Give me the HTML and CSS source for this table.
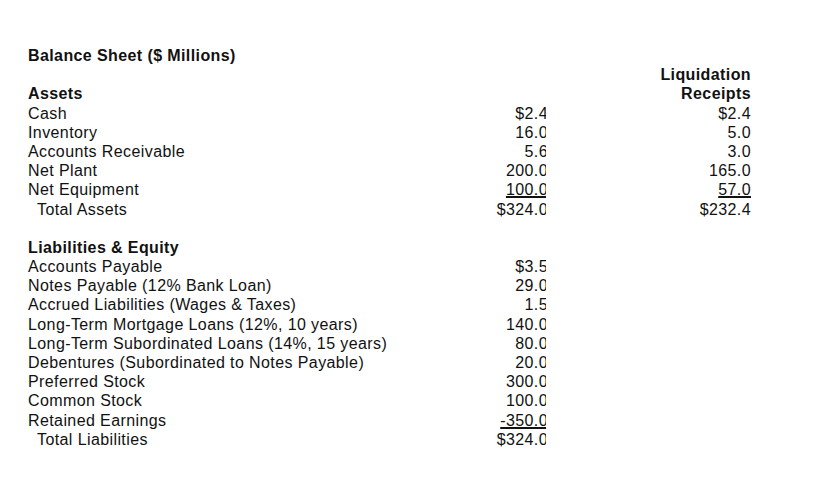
FILE: index.html
```html
<!DOCTYPE html>
<html>
<head>
<meta charset="utf-8">
<link rel="stylesheet" href="styles.css">
</head>
<body>
<div class="sheet">
  <div class="row"><span class="label bold">Balance Sheet ($ Millions)</span><span class="num"></span><span class="liq"></span></div>
  <div class="row"><span class="label"></span><span class="num"></span><span class="liq bold">Liquidation</span></div>
  <div class="row"><span class="label bold">Assets</span><span class="num"></span><span class="liq bold">Receipts</span></div>
  <div class="row"><span class="label">Cash</span><span class="num"><span class="v">$2.4</span></span><span class="liq">$2.4</span></div>
  <div class="row"><span class="label">Inventory</span><span class="num"><span class="v">16.0</span></span><span class="liq">5.0</span></div>
  <div class="row"><span class="label">Accounts Receivable</span><span class="num"><span class="v">5.6</span></span><span class="liq">3.0</span></div>
  <div class="row"><span class="label">Net Plant</span><span class="num"><span class="v">200.0</span></span><span class="liq">165.0</span></div>
  <div class="row"><span class="label">Net Equipment</span><span class="num"><span class="v ul">100.0</span></span><span class="liq"><span class="ul">57.0</span></span></div>
  <div class="row"><span class="label indent">Total Assets</span><span class="num"><span class="v">$324.0</span></span><span class="liq">$232.4</span></div>
  <div class="row"><span class="label"></span><span class="num"></span><span class="liq"></span></div>
  <div class="row"><span class="label bold">Liabilities &amp; Equity</span><span class="num"></span><span class="liq"></span></div>
  <div class="row"><span class="label">Accounts Payable</span><span class="num"><span class="v">$3.5</span></span><span class="liq"></span></div>
  <div class="row"><span class="label">Notes Payable (12% Bank Loan)</span><span class="num"><span class="v">29.0</span></span><span class="liq"></span></div>
  <div class="row"><span class="label">Accrued Liabilities (Wages &amp; Taxes)</span><span class="num"><span class="v">1.5</span></span><span class="liq"></span></div>
  <div class="row"><span class="label">Long-Term Mortgage Loans (12%, 10 years)</span><span class="num"><span class="v">140.0</span></span><span class="liq"></span></div>
  <div class="row"><span class="label">Long-Term Subordinated Loans (14%, 15 years)</span><span class="num"><span class="v">80.0</span></span><span class="liq"></span></div>
  <div class="row"><span class="label">Debentures (Subordinated to Notes Payable)</span><span class="num"><span class="v">20.0</span></span><span class="liq"></span></div>
  <div class="row"><span class="label">Preferred Stock</span><span class="num"><span class="v">300.0</span></span><span class="liq"></span></div>
  <div class="row"><span class="label">Common Stock</span><span class="num"><span class="v">100.0</span></span><span class="liq"></span></div>
  <div class="row"><span class="label">Retained Earnings</span><span class="num"><span class="v ul">-350.0</span></span><span class="liq"></span></div>
  <div class="row"><span class="label indent">Total Liabilities</span><span class="num"><span class="v">$324.0</span></span><span class="liq"></span></div>
</div>
</body>
</html>
```
FILE: styles.css
```css
html, body {
  margin: 0;
  padding: 0;
  background: #fff;
}
body {
  font-family: "Liberation Sans", Arial, sans-serif;
  font-size: 16px;
  letter-spacing: 0.4px;
  color: #111;
}
.sheet {
  padding: 46px 0 0 28px;
  display: flex;
  flex-direction: column;
}
.row {
  display: grid;
  grid-template-columns: 440px 78px 205px;
  height: 19.2px;
  line-height: 19.2px;
}
.label {
  white-space: nowrap;
}
.bold {
  font-weight: bold;
}
.indent {
  padding-left: 9px;
}
.num {
  text-align: right;
  overflow: hidden;
  white-space: nowrap;
}
.num .v {
  display: inline-block;
  margin-right: -2px;
}
.liq {
  text-align: right;
  white-space: nowrap;
}
.liq > span, .liq {
  letter-spacing: 0.4px;
}
.ul {
  text-decoration: underline;
  text-decoration-thickness: 2px;
  text-underline-offset: 1px;
}
```
